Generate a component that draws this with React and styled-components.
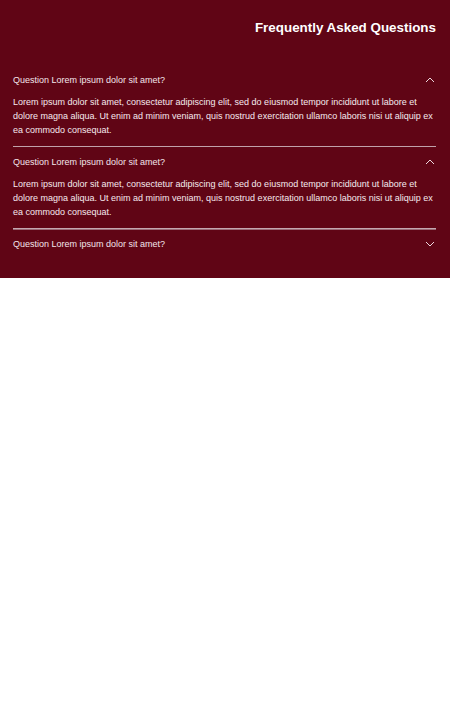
import React, { useState } from 'react';
import styled, { createGlobalStyle } from 'styled-components';

const GlobalStyle = createGlobalStyle`
    body {
        margin: 0;
        background: #ffffff;
        font-family: "Liberation Sans", Arial, sans-serif;
    }
`

const FaqSection = styled.section`
    background: #600515;
    padding: 20px 14px 19px 13px;
    color: #ffffff;
`
const Title = styled.h2`
    margin: 0 0 29px 0;
    text-align: right;
    font-size: 13.4px;
    line-height: 16px;
    font-weight: 700;
`
const Item = styled.div`
    border-top: ${p => (p.first ? 'none' : '1px solid #c0a2aa')};
    ${p => p.thick && `
        border-top: 1px solid #c4a8b0;
        box-shadow: inset 0 1px 0 #9a6a76;
    `}
`
const QuestionRow = styled.button`
    display: flex;
    align-items: center;
    justify-content: space-between;
    width: 100%;
    padding: 8px 0;
    border: 0;
    background: none;
    color: #f3e6ea;
    font-family: inherit;
    font-size: 9px;
    line-height: 14px;
    text-align: left;
    cursor: pointer;
    svg {
        margin-right: 1px;
    }
`
const Answer = styled.p`
    margin: 0;
    padding-bottom: 9px;
    font-size: 9px;
    line-height: 14px;
    color: #f6eaee;
`

const Chevron = ({ up }) => (
    <svg width="10" height="6" viewBox="0 0 10 6" fill="none">
        <path
            d={up ? 'M1 5 L5 1 L9 5' : 'M1 1 L5 5 L9 1'}
            stroke="#eed8de"
            strokeWidth="1"
        />
    </svg>
)

const text = 'Lorem ipsum dolor sit amet, consectetur adipiscing elit, sed do eiusmod tempor incididunt ut labore et dolore magna aliqua. Ut enim ad minim veniam, quis nostrud exercitation ullamco laboris nisi ut aliquip ex ea commodo consequat.'

const faqs = [
    { q: 'Question Lorem ipsum dolor sit amet?', a: text },
    { q: 'Question Lorem ipsum dolor sit amet?', a: text },
    { q: 'Question Lorem ipsum dolor sit amet?', a: text },
]

export default function App() {
    const [open, setOpen] = useState([true, true, false])

    const toggle = i => setOpen(open.map((o, j) => (j === i ? !o : o)))

    return (
        <>
            <GlobalStyle />
            <FaqSection>
                <Title>Frequently Asked Questions</Title>
                {faqs.map((f, i) => (
                    <Item key={i} first={i === 0} thick={i === 2}>
                        <QuestionRow onClick={() => toggle(i)}>
                            <span>{f.q}</span>
                            <Chevron up={open[i]} />
                        </QuestionRow>
                        {open[i] && <Answer>{f.a}</Answer>}
                    </Item>
                ))}
            </FaqSection>
        </>
    )
}
